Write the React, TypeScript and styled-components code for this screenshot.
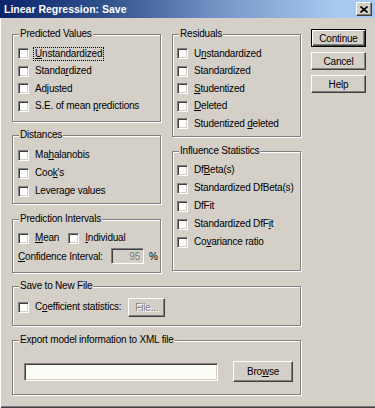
import styled, { createGlobalStyle } from "styled-components";

const Global = createGlobalStyle`
  html, body {
    margin: 0;
    padding: 0;
    background: #d4d0c8;
  }
`;

const Window = styled.div`
  width: 375px;
  height: 408px;
  box-sizing: border-box;
  background: #d4d0c8;
  box-shadow: inset 1px 0 #ffffff, inset 0 -1px #404040, inset 0 -2px #808080;
  display: flex;
  flex-direction: column;
  font-family: "Liberation Sans", Arial, sans-serif;
  font-size: 10px;
  letter-spacing: -0.2px;
  color: #000;
`;

const TitleBar = styled.div`
  height: 18px;
  display: flex;
  align-items: center;
  justify-content: space-between;
  padding: 0 3px 0 4px;
  background: linear-gradient(90deg, #0a246a 0%, #34558f 30%, #7898c8 60%, #a6caf0 90%);
  color: #fff;
  font-weight: bold;
  font-size: 10.5px;
  letter-spacing: 0;
`;

const CloseButton = styled.div`
  width: 16px;
  height: 14px;
  box-sizing: border-box;
  background: #d4d0c8;
  border: 1px solid;
  border-color: #ffffff #404040 #404040 #ffffff;
  box-shadow: inset -1px -1px #808080;
  display: flex;
  align-items: center;
  justify-content: center;
`;

const Body = styled.div`
  display: flex;
  flex-direction: column;
  padding: 11px 0 0 12px;
`;

const TopRow = styled.div`
  display: flex;
  align-items: flex-start;
`;

const Column = styled.div<{ $w: number; $ml?: number }>`
  display: flex;
  flex-direction: column;
  width: ${(p) => p.$w}px;
  margin-left: ${(p) => p.$ml ?? 0}px;
`;

const ButtonColumn = styled.div`
  display: flex;
  flex-direction: column;
  gap: 5px;
  width: 55px;
  margin-left: 10px;
`;

const Group = styled.div<{ $mt: number; $h: number; $pt: number; $pl: number; $w?: number }>`
  position: relative;
  box-sizing: border-box;
  margin-top: ${(p) => p.$mt}px;
  height: ${(p) => p.$h}px;
  width: ${(p) => (p.$w ? `${p.$w}px` : "auto")};
  padding: ${(p) => p.$pt}px 0 0 ${(p) => p.$pl}px;
  border: 1px solid #808080;
  box-shadow: inset 1px 1px #ffffff, 1px 1px #ffffff;
`;

const Legend = styled.span`
  position: absolute;
  top: -7px;
  left: 6px;
  padding: 0 1px;
  line-height: 12px;
  background: #d4d0c8;
  white-space: nowrap;
`;

const Row = styled.div<{ $h: number }>`
  display: flex;
  align-items: center;
  height: ${(p) => p.$h}px;
  white-space: nowrap;
`;

const Check = styled.span<{ $ml?: number }>`
  width: 11px;
  height: 11px;
  flex: none;
  box-sizing: border-box;
  margin-left: ${(p) => p.$ml ?? 0}px;
  background: #ffffff;
  border: 1px solid;
  border-color: #808080 #ffffff #ffffff #808080;
  box-shadow: inset 1px 1px #404040, inset -1px -1px #d4d0c8;
`;

const Label = styled.span<{ $focus?: boolean }>`
  margin-left: 5px;
  line-height: 12px;
  padding: 0 1px;
  outline: ${(p) => (p.$focus ? "1px dotted #000" : "none")};
`;

const Key = styled.span`
  text-decoration: underline;
`;

const ConfLabel = styled.span`
  width: 93px;
  flex: none;
`;

const Field = styled.input<{ $w: number; $h: number; $disabled?: boolean }>`
  width: ${(p) => p.$w}px;
  height: ${(p) => p.$h}px;
  box-sizing: border-box;
  margin: 0;
  padding: 0 3px;
  font: inherit;
  letter-spacing: inherit;
  text-align: ${(p) => (p.$disabled ? "right" : "left")};
  color: ${(p) => (p.$disabled ? "#808080" : "#000")};
  background: ${(p) => (p.$disabled ? "#d4d0c8" : "#fcfcf6")};
  border: 1px solid;
  border-color: #808080 #ffffff #ffffff #808080;
  box-shadow: inset 1px 1px #404040, inset -1px -1px #d4d0c8;
  outline: none;
`;

const Percent = styled.span`
  margin-left: 5px;
`;

const Button = styled.div<{ $w?: number; $h: number; $ml?: number; $default?: boolean; $disabled?: boolean }>`
  width: ${(p) => (p.$w ? `${p.$w}px` : "100%")};
  height: ${(p) => p.$h}px;
  box-sizing: border-box;
  margin-left: ${(p) => p.$ml ?? 0}px;
  flex: none;
  display: flex;
  align-items: center;
  justify-content: center;
  background: #d4d0c8;
  color: ${(p) => (p.$disabled ? "#808080" : "#000")};
  text-shadow: ${(p) => (p.$disabled ? "1px 1px #ffffff" : "none")};
  border: 1px solid;
  border-color: ${(p) => (p.$default ? "#000 #000 #000 #000" : "#ffffff #404040 #404040 #ffffff")};
  box-shadow: ${(p) =>
    p.$default
      ? "inset 1px 1px #ffffff, inset -1px -1px #404040, inset -2px -2px #808080"
      : "inset -1px -1px #808080"};
`;

type Item = { label: React.ReactNode; focus?: boolean };

function CheckRows({ items, h }: { items: Item[]; h: number }) {
  return (
    <>
      {items.map((it, i) => (
        <Row key={i} $h={h}>
          <Check />
          <Label $focus={it.focus}>{it.label}</Label>
        </Row>
      ))}
    </>
  );
}

export default function App() {
  return (
    <Window>
      <Global />
      <TitleBar>
        <span>Linear Regression: Save</span>
        <CloseButton>
          <svg width="8" height="7" viewBox="0 0 8 7">
            <path d="M0.5 0.5 L7.5 6.5 M7.5 0.5 L0.5 6.5" stroke="#000" strokeWidth="1.6" fill="none" />
          </svg>
        </CloseButton>
      </TitleBar>
      <Body>
        <TopRow>
          <Column $w={149}>
            <Group $mt={5} $h={88} $pt={10} $pl={5}>
              <Legend>Predicted Values</Legend>
              <CheckRows
                h={17.5}
                items={[
                  { label: <><Key>U</Key>nstandardized</>, focus: true },
                  { label: <>Standa<Key>r</Key>dized</> },
                  { label: <>Ad<Key>j</Key>usted</> },
                  { label: <>S.E. of mean <Key>p</Key>redictions</> },
                ]}
              />
            </Group>
            <Group $mt={13} $h={69} $pt={10} $pl={5}>
              <Legend>Distances</Legend>
              <CheckRows
                h={18}
                items={[
                  { label: <>Ma<Key>h</Key>alanobis</> },
                  { label: <>Coo<Key>k</Key>'s</> },
                  { label: <>Leverage values</> },
                ]}
              />
            </Group>
            <Group $mt={15} $h={54} $pt={9} $pl={5}>
              <Legend>Prediction Intervals</Legend>
              <Row $h={18}>
                <Check />
                <Label><Key>M</Key>ean</Label>
                <Check $ml={8} />
                <Label><Key>I</Key>ndividual</Label>
              </Row>
              <Row $h={18}>
                <ConfLabel><Key>C</Key>onfidence Interval:</ConfLabel>
                <Field $w={33} $h={16} $disabled value="95" readOnly />
                <Percent>%</Percent>
              </Row>
            </Group>
          </Column>
          <Column $w={129} $ml={11}>
            <Group $mt={5} $h={103} $pt={10} $pl={4}>
              <Legend>Residuals</Legend>
              <CheckRows
                h={17.5}
                items={[
                  { label: <>U<Key>n</Key>standardized</> },
                  { label: <>Standardized</> },
                  { label: <><Key>S</Key>tudentized</> },
                  { label: <><Key>D</Key>eleted</> },
                  { label: <>Studentized <Key>d</Key>eleted</> },
                ]}
              />
            </Group>
            <Group $mt={14} $h={120} $pt={9} $pl={4}>
              <Legend>Influence Statistics</Legend>
              <CheckRows
                h={18}
                items={[
                  { label: <>Df<Key>B</Key>eta(s)</> },
                  { label: <>Standardized DfBeta(s)</> },
                  { label: <>DfFit</> },
                  { label: <>Standardized DfF<Key>i</Key>t</> },
                  { label: <>Co<Key>v</Key>ariance ratio</> },
                ]}
              />
            </Group>
          </Column>
          <ButtonColumn>
            <Button $h={18} $default>Continue</Button>
            <Button $h={18}>Cancel</Button>
            <Button $h={18}>Help</Button>
          </ButtonColumn>
        </TopRow>
        <Group $mt={13} $h={40} $w={289} $pt={10} $pl={5}>
          <Legend>Save to New File</Legend>
          <Row $h={20}>
            <Check />
            <Label>C<Key>o</Key>efficient statistics:</Label>
            <Button $w={37} $h={19} $ml={6} $disabled>File...</Button>
          </Row>
        </Group>
        <Group $mt={14} $h={55} $w={289} $pt={20} $pl={11}>
          <Legend>Export model information to XML file</Legend>
          <Row $h={21}>
            <Field $w={194} $h={18} value="" readOnly />
            <Button $w={60} $h={21} $ml={15}>Bro<Key>w</Key>se</Button>
          </Row>
        </Group>
      </Body>
    </Window>
  );
}
